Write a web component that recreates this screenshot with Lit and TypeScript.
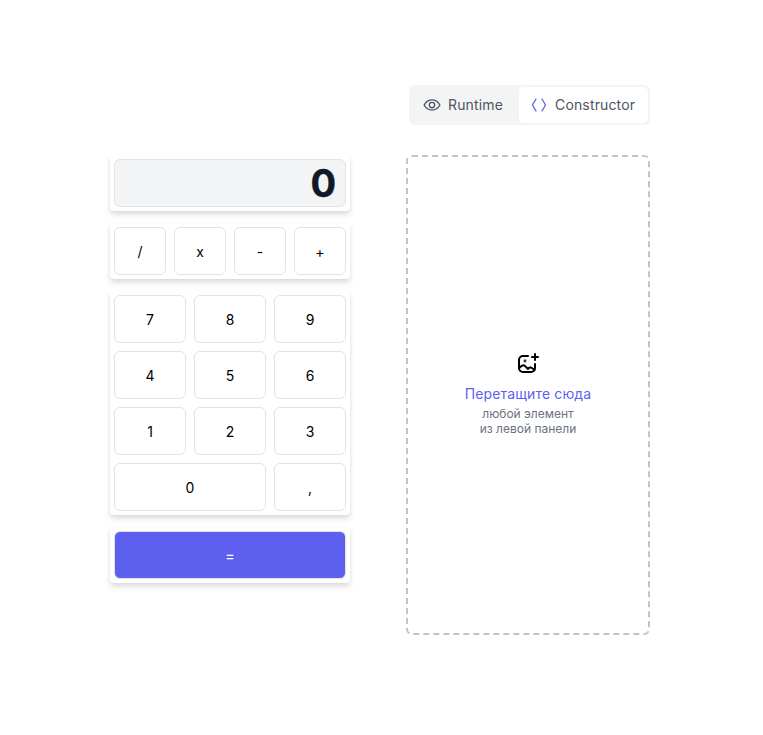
import { LitElement, html, css } from "lit";
import { customElement } from "lit/decorators.js";

@customElement("app-root")
export class AppRoot extends LitElement {
  static styles = css`
    :host { display: block; height: 735px; background: #fff; font-family: Inter, "Liberation Sans", sans-serif; font-optical-sizing: none; }
    .page { display: flex; align-items: flex-start; gap: 56px; padding: 85px 0 0 110px; }
    .calc { display: flex; flex-direction: column; gap: 12px; width: 240px; margin-top: 70px; }
    .card { background: #fff; padding: 4px; border-radius: 4px; box-shadow: 0 2px 4px rgba(0,0,0,.06), 0 4px 6px rgba(0,0,0,.1); }
    .display { height: 48px; box-sizing: border-box; background: #f3f4f6; border: 1px solid #e2e3e5; border-radius: 6px; display: flex; align-items: center; justify-content: flex-end; padding: 0 9px 0 0; font-size: 38px; line-height: 44px; font-weight: 700; font-variation-settings: "opsz" 14; color: #111827; -webkit-text-stroke: 0.4px #111827; }
    .ops { display: grid; grid-template-columns: repeat(4, 52px); gap: 8px; }
    .digits { display: grid; grid-template-columns: repeat(3, 72px); grid-auto-rows: 48px; gap: 8px; }
    .wide { grid-column: span 2; }
    button { height: 48px; padding: 0; box-sizing: border-box; background: #fff; border: 1px solid #e2e3e5; border-radius: 6px; font: 400 14px Inter, "Liberation Sans", sans-serif; font-optical-sizing: none; color: #000; }
    .eq { display: block; width: 232px; background: #5d5fef; border-color: #e2e3e5; color: #fff; font-weight: 500; }
    .right { display: flex; flex-direction: column; width: 244px; gap: 30px; }
    .toggle { align-self: flex-end; display: flex; gap: 4px; box-sizing: border-box; height: 40px; width: 241px; padding: 2px; background: #f3f4f6; border-radius: 6px; }
    .tab { display: flex; align-items: center; gap: 7px; padding: 0 12px 2px; border-radius: 5px; font-size: 14px; font-weight: 400; letter-spacing: 0.15px; color: #4d5562; }
    .tab.active { background: #fff; flex: 1; gap: 8px; }
    .tab svg { flex: none; display: block; margin-top: 2px; }
    .canvas { height: 480px; box-sizing: border-box; border: 2px dashed #c4c4c4; border-radius: 6px; padding-bottom: 1px; display: flex; flex-direction: column; align-items: center; justify-content: center; text-align: center; }
    .canvas svg { display: block; margin-bottom: 9px; }
    .title { font-size: 14px; line-height: 20px; font-weight: 400; letter-spacing: 0.13px; color: #5d5fef; margin-bottom: 2px; }
    .sub { font-size: 12px; line-height: 15px; color: #6b7280; }
  `;

  render() {
    return html`<div class="page">
      <div class="calc">
        <div class="card"><div class="display">0</div></div>
        <div class="card ops">${["/", "x", "-", "+"].map((k) => html`<button>${k}</button>`)}</div>
        <div class="card digits">
          ${["7", "8", "9", "4", "5", "6", "1", "2", "3"].map((k) => html`<button>${k}</button>`)}
          <button class="wide">0</button><button>,</button>
        </div>
        <div class="card"><button class="eq">=</button></div>
      </div>
      <div class="right">
        <div class="toggle">
          <div class="tab">
            <svg width="18" height="18" viewBox="0 0 24 24" fill="none" stroke="#4d5562" stroke-width="1.800"><path d="M1.500 12C4 7.500 7.500 5.200 12 5.200S20 7.500 22.500 12C20 16.500 16.500 18.800 12 18.800S4 16.500 1.500 12Z"/><circle cx="12" cy="12" r="3.600"/></svg>
            Runtime
          </div>
          <div class="tab active">
            <svg width="16" height="16" viewBox="0 0 16 16" fill="none" stroke="#5d5fef" stroke-width="1.300" stroke-linecap="round" stroke-linejoin="round"><path d="M5 2 1.500 8 5 14M11 2l3.500 6L11 14"/></svg>
            Constructor
          </div>
        </div>
        <div class="canvas">
          <svg width="22" height="22" viewBox="0 0 22 22" fill="none" stroke="#000" stroke-width="2" stroke-linecap="round" stroke-linejoin="round"><path d="M11 3H6a4 4 0 0 0-4 4v8a4 4 0 0 0 4 4h8a4 4 0 0 0 4-4v-4"/><path d="M2.500 14.500c2-2 4-3 5.500-1.500l3 3c1-1.500 2.500-2 4-1l2.500 2"/><circle cx="8" cy="8" r=".4"/><path d="M18 1v6M15 4h6"/></svg>
          <div class="title">Перетащите сюда</div>
          <div class="sub">любой элемент<br />из левой панели</div>
        </div>
      </div>
    </div>`;
  }
}
